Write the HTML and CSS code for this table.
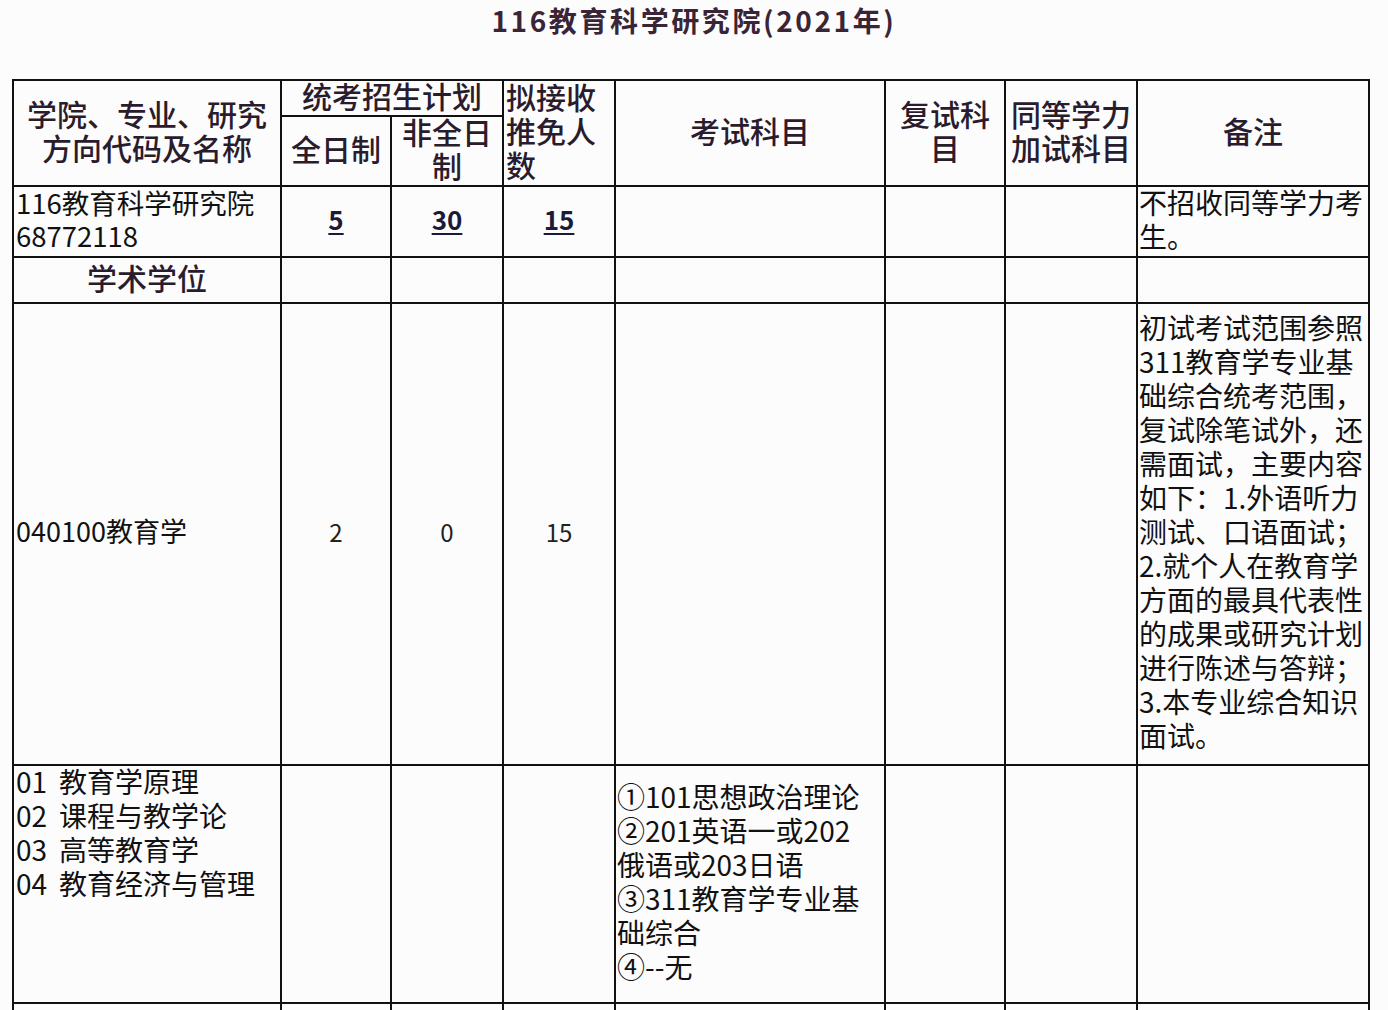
FILE: index.html
```html
<!DOCTYPE html>
<html lang="zh-CN">
<head>
<meta charset="utf-8">
<title>116教育科学研究院(2021年)</title>
<link rel="stylesheet" href="styles.css">
</head>
<body>
<div class="page">
  <h1 class="title">116教育科学研究院(2021年)</h1>
  <table class="plan">
    <colgroup>
      <col class="c1"><col class="c2"><col class="c3"><col class="c4"><col class="c5"><col class="c6"><col class="c7"><col class="c8">
    </colgroup>
    <tr class="h1">
      <td class="hd" rowspan="2"><div class="in">学院、专业、研究<br>方向代码及名称</div></td>
      <td class="hd" colspan="2"><div class="in">统考招生计划</div></td>
      <td class="hd left" rowspan="2"><div class="in">拟接收<br>推免人<br>数</div></td>
      <td class="hd" rowspan="2"><div class="in">考试科目</div></td>
      <td class="hd" rowspan="2"><div class="in">复试科<br>目</div></td>
      <td class="hd" rowspan="2"><div class="in">同等学力<br>加试科目</div></td>
      <td class="hd" rowspan="2"><div class="in">备注</div></td>
    </tr>
    <tr class="h2">
      <td class="hd"><div class="in">全日制</div></td>
      <td class="hd"><div class="in">非全日<br>制</div></td>
    </tr>
    <tr class="r1">
      <td class="txt big"><div class="in">116教育科学研究院<br>68772118</div></td>
      <td class="num"><div class="in"><u>5</u></div></td>
      <td class="num"><div class="in"><u>30</u></div></td>
      <td class="num"><div class="in"><u>15</u></div></td>
      <td></td>
      <td></td>
      <td></td>
      <td class="txt"><div class="in">不招收同等学力考<br>生。</div></td>
    </tr>
    <tr class="r2">
      <td class="hd"><div class="in">学术学位</div></td>
      <td></td><td></td><td></td><td></td><td></td><td></td><td></td>
    </tr>
    <tr class="r3">
      <td class="txt major"><div class="in">040100教育学</div></td>
      <td class="val"><div class="in">2</div></td>
      <td class="val"><div class="in">0</div></td>
      <td class="val"><div class="in">15</div></td>
      <td></td>
      <td></td>
      <td></td>
      <td class="txt"><div class="in">初试考试范围参照<br>311教育学专业基<br>础综合统考范围，<br>复试除笔试外，还<br>需面试，主要内容<br>如下：1.外语听力<br>测试、口语面试；<br>2.就个人在教育学<br>方面的最具代表性<br>的成果或研究计划<br>进行陈述与答辩；<br>3.本专业综合知识<br>面试。</div></td>
    </tr>
    <tr class="r4">
      <td class="txt top"><div class="dirs">01<span class="gap"></span>教育学原理<br>02<span class="gap"></span>课程与教学论<br>03<span class="gap"></span>高等教育学<br>04<span class="gap"></span>教育经济与管理</div></td>
      <td></td>
      <td></td>
      <td></td>
      <td class="txt"><div class="in">①101思想政治理论<br>②201英语一或202<br>俄语或203日语<br>③311教育学专业基<br>础综合<br>④--无</div></td>
      <td></td>
      <td></td>
      <td></td>
    </tr>
    <tr class="r5">
      <td></td><td></td><td></td><td></td><td></td><td></td><td></td><td></td>
    </tr>
  </table>
</div>
</body>
</html>
```

FILE: styles.css
```css
html, body {
  margin: 0;
  padding: 0;
  height: 1010px;
  overflow: hidden;
  background: #fcfcfd;
}

.page {
  font-family: "Noto Sans CJK SC", "Noto Sans", sans-serif;
  color: #111;
}

.title {
  margin: 0;
  height: 79px;
  box-sizing: border-box;
  padding-top: 4px;
  text-align: center;
  font-size: 28px;
  line-height: 32px;
  font-weight: 700;
  letter-spacing: 2.6px;
  color: #3a2536;
}

.plan {
  border-collapse: collapse;
  table-layout: fixed;
  width: 1358px;
  margin-left: 12px;
}

.c1 { width: 268px; }
.c2 { width: 110px; }
.c3 { width: 112px; }
.c4 { width: 112px; }
.c5 { width: 270px; }
.c6 { width: 120px; }
.c7 { width: 132px; }
.c8 { width: 232px; }

.plan td {
  border: 2px solid #111;
  padding: 0 1px;
  vertical-align: middle;
}

.in {
  margin-top: -6px;
}

.h1 { height: 36px; }
.h2 { height: 70px; }
.r1 { height: 71px; }
.r2 { height: 46px; }
.r3 { height: 462px; }
.r4 { height: 238px; }
.r5 { height: 80px; }

.hd {
  text-align: center;
  font-size: 30px;
  line-height: 34px;
  font-weight: 500;
  color: #2a1c2d;
}

.hd.left {
  text-align: left;
  padding-left: 2px;
}

.txt {
  text-align: left;
  font-size: 28px;
  line-height: 34px;
  color: #111;
}

.txt.big {
  font-size: 27.5px;
  line-height: 33px;
  padding-left: 2px;
}

.txt.major {
  font-size: 27px;
  padding-left: 2px;
}

.txt.top {
  vertical-align: top;
  padding-left: 2px;
}

.dirs {
  margin-top: -2px;
}

.gap {
  display: inline-block;
  width: 12px;
}

.num {
  text-align: center;
  font-size: 26px;
  font-weight: 700;
  color: #1c1a38;
}

.num u {
  text-decoration-thickness: 2px;
  text-underline-offset: 3px;
}

.val {
  text-align: center;
  font-size: 24px;
  color: #222;
}
```
